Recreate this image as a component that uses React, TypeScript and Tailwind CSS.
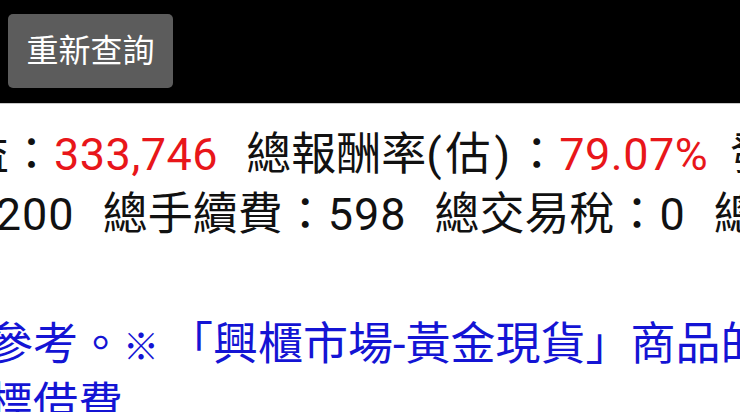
const font = { fontFamily: 'Roboto, "Noto Sans CJK TC", sans-serif' };

const Gap = ({ w = "w-[28px]" }: { w?: string }) => <span className={`inline-block ${w}`} />;

export default function App() {
  return (
    <div
      className="w-[740px] h-[412px] overflow-hidden bg-white text-[#111]"
      style={font}
    >
      <div className="h-[104px] bg-black pl-[8px] pt-[14px] border-b border-[#c8c8c8]">
        <button className="w-[165px] h-[74px] rounded-[5px] bg-[#5c5c5c] text-white text-[32px] leading-none">
          重新查詢
        </button>
      </div>

      <div className="pt-[21px] text-[45px] leading-[60px]">
        <div className="whitespace-nowrap -ml-[126px]">
          <span>總損益：</span>
          <span className="text-[#e8161a] tracking-[0.5px]">333,746</span>
          <Gap />
          <span>總報酬率</span>
          <span className="tracking-[4px]">(估)</span>
          <span>：</span>
          <span className="text-[#e8161a] tracking-[0.5px]">79.07%</span>
          <Gap w="w-[22px]" />
          <span>發生費用</span>
        </div>
        <div className="whitespace-nowrap -ml-[273px]">
          <span>總成本：</span>
          <span className="tracking-[1px]">422,200</span>
          <Gap />
          <span>總手續費：</span>
          <span className="tracking-[1px]">598</span>
          <Gap />
          <span>總交易稅：</span>
          <span className="tracking-[1px]">0</span>
          <Gap />
          <span>總借券費：0</span>
        </div>
      </div>

      <div className="mt-[70px] -ml-[12px] text-[45px] leading-[60px] text-[#1414d4] whitespace-nowrap">
        <div>
          參考。
          <span className="inline-block w-[45px] pr-[10px] text-center text-[36px] leading-none">※</span>
          「興櫃市場-黃金現貨」商品的
        </div>
        <div>標借費</div>
      </div>
    </div>
  );
}
